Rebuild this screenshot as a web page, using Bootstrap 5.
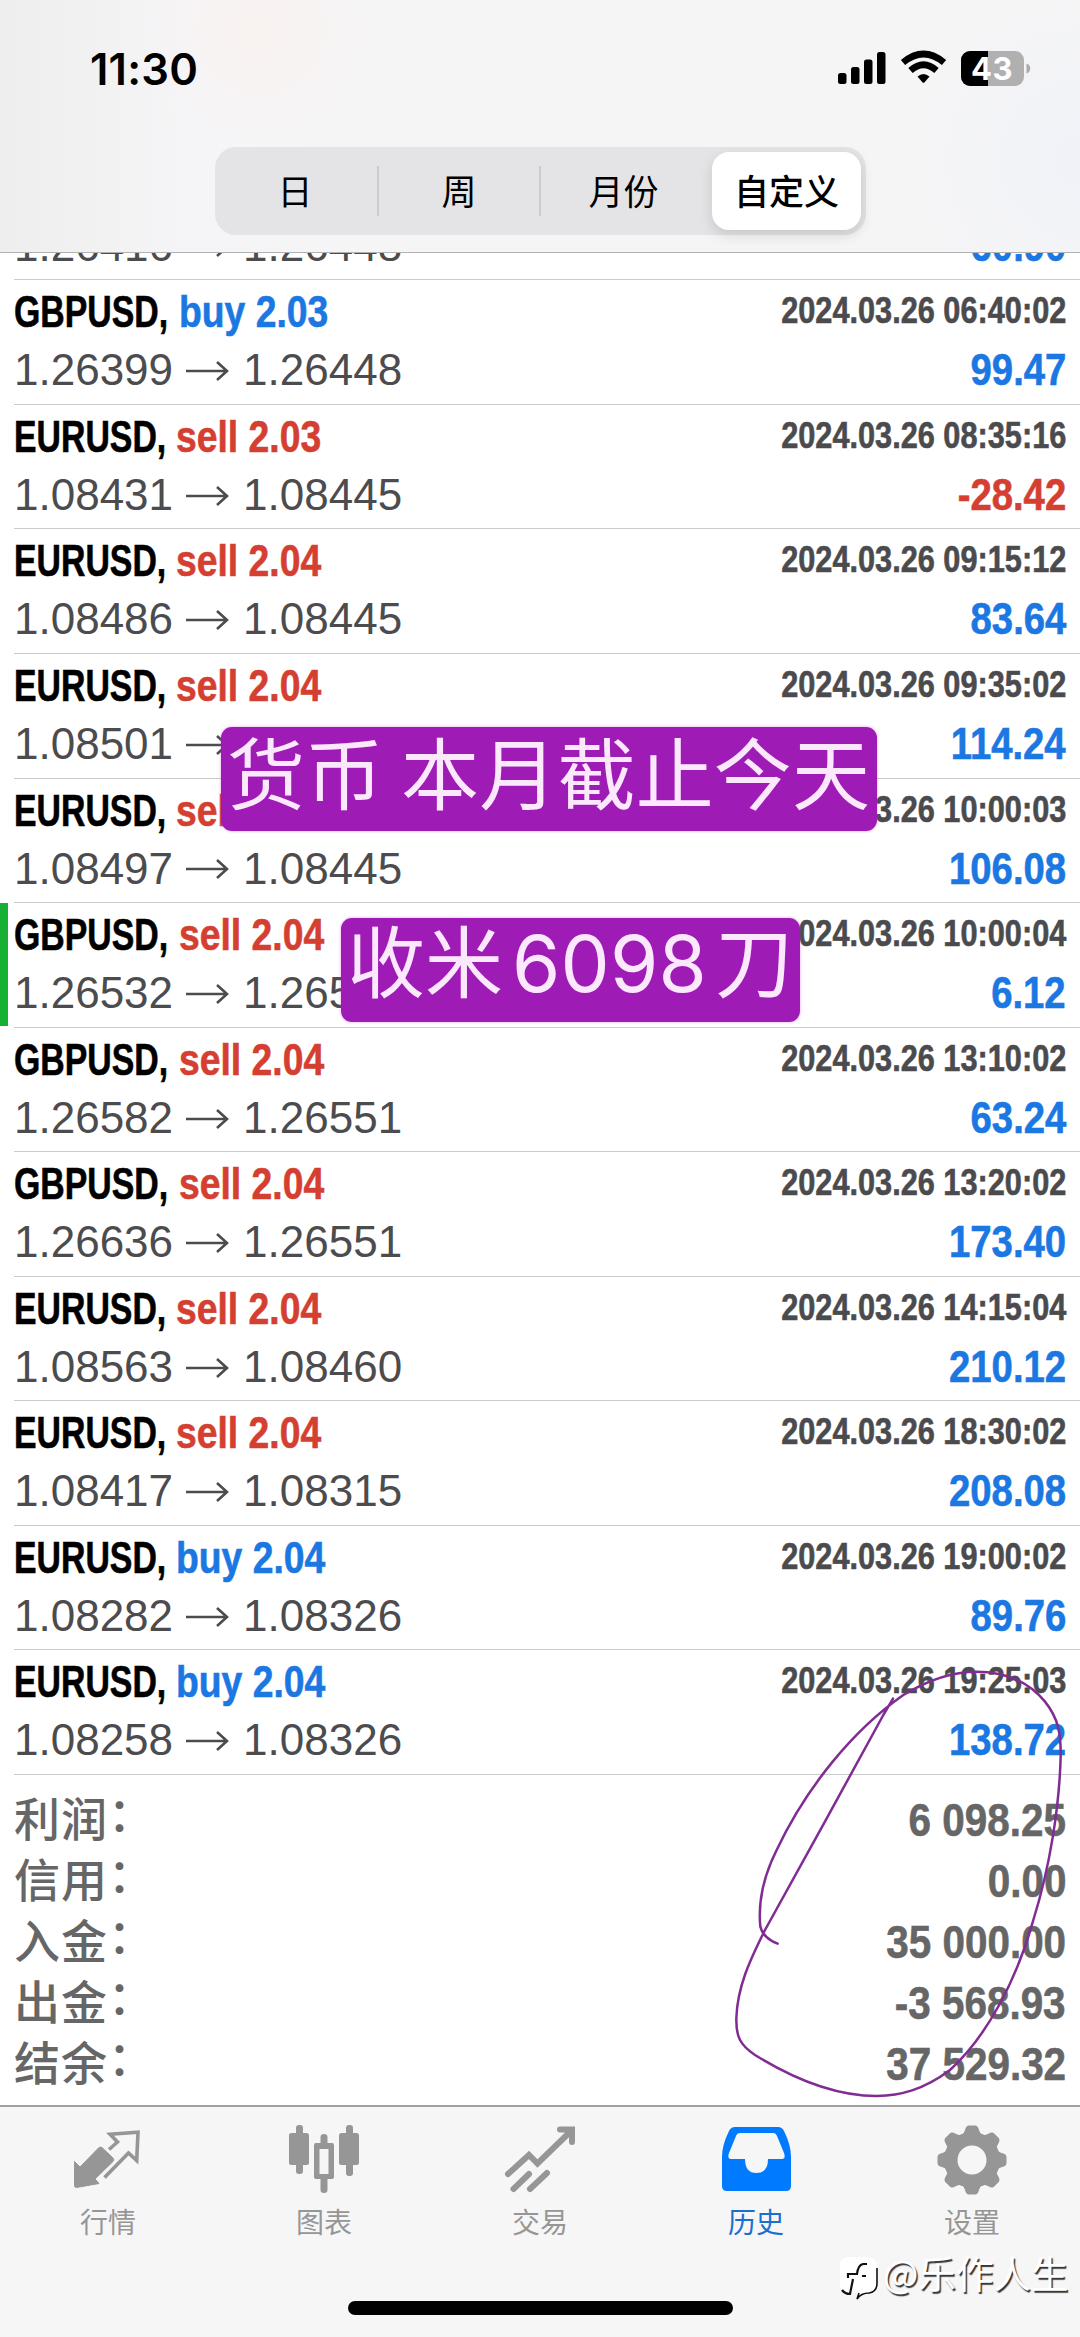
<!DOCTYPE html>
<html lang="zh-CN">
<head>
<meta charset="utf-8">
<meta name="viewport" content="width=device-width, initial-scale=1">
<title>历史</title>
<link href="https://cdn.jsdelivr.net/npm/bootstrap@5.3.0/dist/css/bootstrap.min.css" rel="stylesheet">
<script src="https://cdn.jsdelivr.net/npm/bootstrap@5.3.0/dist/js/bootstrap.bundle.min.js"></script>
<style>
body{width:1080px;height:2337px;overflow:hidden;background:#fff;font-family:"Liberation Sans","Noto Sans CJK SC",sans-serif}
.screen{width:1080px;height:2337px;overflow:hidden}
.topbar{height:253px;border-bottom:1.5px solid #b2b2b4;background:radial-gradient(circle at 260px 30px,#f9f2f1 0,rgba(249,242,241,0) 130px),radial-gradient(circle at 1080px 160px,#f0f2f8 0,rgba(240,242,248,0) 160px),linear-gradient(90deg,#eee 0,#f5f5f7 190px,#f5f5f6 100%)}
.statusrow{height:147px;padding:39px 49px 0 90px}
.clock{font:600 43.5px/60px Inter,sans-serif;letter-spacing:.2px;color:#000}
.segments{width:651px;height:88px;margin-left:215px;border-radius:21px;background:#e4e4e6;padding:5px}
.segments button{border:0;background:none;padding:0 0 3px;font:400 35px/75px "Noto Sans CJK SC",sans-serif;color:#000;border-radius:17px;width:162px;height:78px}
.segments button:first-child{width:158px;padding-right:8px}
.segments button:nth-of-type(3){padding-left:5px}
.segments button.on{background:#fff;width:149px;font-weight:500;box-shadow:0 5px 14px rgba(0,0,0,.13)}
.segments i{width:2px;height:50px;background:#cbcbcf;margin-left:-1px;margin-right:-1px}
.deals{height:1522px;overflow:hidden}
.deal{height:124.57px;flex:none;margin-left:14px;padding:3px 14px 0 0;border-bottom:1.5px solid #cbcbcd;position:relative}
.deal .line{height:58px;line-height:58px;font-size:44.5px;white-space:nowrap}
.sym,.act,.when,.sum{-webkit-text-stroke:.6px currentColor}
.sym{display:inline-block;font-weight:700;color:#000;transform:scaleX(.76);transform-origin:0 50%;margin-right:-38px}
.act{display:inline-block;font-weight:700;transform:scaleX(.838);transform-origin:0 50%}
.when{display:inline-block;font-weight:700;font-size:36px;line-height:56px;color:#4b4b4e;transform:scaleX(.853);transform-origin:100% 50%}
.sum{display:inline-block;font-weight:700;transform:scaleX(.86);transform-origin:100% 50%}
.up{color:#1b77e2}.down{color:#d43f31}
.px{font-size:44px;color:#4c4c4f}
.px svg{width:43px;height:22px;margin:0 14px 5px 13px;display:inline-block;vertical-align:middle}
.marked::before{content:"";position:absolute;left:-14px;top:0;width:8px;height:123px;background:#15b034}
.totals{height:332px;padding:14px 14px 0 14px;color:#666;border-bottom:2px solid #a0a0a3}
.totals>div{height:61px;line-height:61px}
.totals .k{font-family:"Noto Sans CJK SC",sans-serif;font-size:46px;font-weight:500;letter-spacing:1px;line-height:54px}
.totals .k b{display:inline-block;font-weight:500;transform:translate(0,-5px)}
.totals .sum{font-size:47px}
.tabs{height:230px;background:#f6f6f6}
.tab{width:216px;padding-top:13px;color:#969696}
.tab svg{width:76px;height:76px}
.tab span{font:400 28px/34px "Noto Sans CJK SC",sans-serif;margin-top:8px}
.tab.on{color:#007aff}.tab.on span{color:#1a6fd0}
.homebar{position:absolute;left:348px;top:2301px;width:385px;height:14px;border-radius:7px;background:#000}
.sticker{position:absolute;background:#9f1bb6;color:#fce8fd;border-radius:11px;height:104px;font:400 78px/90px Inter,"Noto Sans CJK SC",sans-serif;white-space:nowrap;box-shadow:0 0 3px rgba(200,60,220,.5)}
.s1{left:221px;top:727px;width:656px;padding-left:6px;line-height:86px;font-family:"Noto Sans CJK SC",sans-serif;letter-spacing:.2px}
.s2{left:341px;top:918px;width:459px;padding-left:6px;line-height:92px}
.s2 em{font-style:normal;margin:0 8px 0 9px;letter-spacing:.2px}
.ink{position:absolute;left:640px;top:1620px;width:440px;height:500px}
.sign{position:absolute;left:839px;top:2249px;height:50px;color:#fff;font:400 37.5px/46px "Noto Sans CJK SC",sans-serif;text-shadow:1.5px 1.5px 1px #333;white-space:nowrap}
.sign svg{width:40px;height:46px;margin-right:4px;margin-top:7px}
</style>
</head>
<body>
<svg class="d-none"><symbol id="arr" viewBox="0 0 43 22"><path d="M0 11H41M31 2l10 9-10 9" fill="none" stroke="#4c4c4f" stroke-width="2.600"/></symbol></svg>
<main class="screen position-relative d-flex flex-column">
<header class="topbar flex-shrink-0">
  <div class="statusrow d-flex justify-content-between align-items-start">
    <div class="clock">11:30</div>
    <svg width="193" height="44" viewBox="0 0 193 44" style="margin-top:8px">
      <g><rect x="0" y="26" width="8.5" height="11" rx="2.5"/><rect x="13" y="20" width="8.5" height="17" rx="2.5"/><rect x="26" y="12.500" width="8.500" height="24.500" rx="2.500"/><rect x="39" y="5" width="8.500" height="32" rx="2.500"/></g>
      <g fill="none" stroke="#000" stroke-width="6.600"><path d="M65 15.500Q85.500 -1.500 106 15.500"/><path d="M72.500 23.500Q85.500 12 98.500 23.500"/></g>
      <path d="M79.500 29.500Q85.500 24.500 91.500 29.500L86.600 35.300Q85.500 36.400 84.400 35.300Z"/>
      <rect x="123" y="4" width="63" height="35" rx="9" fill="#b0b0b1"/><path d="M132 4h18v35h-18a9 9 0 0 1-9-9V13a9 9 0 0 1 9-9z"/>
      <path d="M188.500 16.500c5 1.500 5 8.500 0 10z" fill="#aaaaac"/>
      <text x="154" y="32.500" text-anchor="middle" font-family="Inter, sans-serif" font-weight="700" font-size="31" letter-spacing=".5" fill="#fff">43</text>
    </svg>
  </div>
  <div class="segments d-flex align-items-center">
    <button type="button">日</button><i></i><button type="button">周</button><i></i><button type="button">月份</button><button type="button" class="on ms-auto">自定义</button>
  </div>
</header>

<section class="deals d-flex flex-column justify-content-end flex-shrink-0">
  <div class="deal"><div class="line"></div><div class="line d-flex justify-content-between"><span class="px">1.26416<svg><use href="#arr"/></svg>1.26448</span><span class="sum up">60.90</span></div></div>
  <div class="deal"><div class="line d-flex justify-content-between"><div><span class="sym">GBPUSD,</span><span class="act up">buy 2.03</span></div><span class="when">2024.03.26 06:40:02</span></div><div class="line d-flex justify-content-between"><span class="px">1.26399<svg><use href="#arr"/></svg>1.26448</span><span class="sum up">99.47</span></div></div>
  <div class="deal"><div class="line d-flex justify-content-between"><div><span class="sym">EURUSD,</span><span class="act down">sell 2.03</span></div><span class="when">2024.03.26 08:35:16</span></div><div class="line d-flex justify-content-between"><span class="px">1.08431<svg><use href="#arr"/></svg>1.08445</span><span class="sum down">-28.42</span></div></div>
  <div class="deal"><div class="line d-flex justify-content-between"><div><span class="sym">EURUSD,</span><span class="act down">sell 2.04</span></div><span class="when">2024.03.26 09:15:12</span></div><div class="line d-flex justify-content-between"><span class="px">1.08486<svg><use href="#arr"/></svg>1.08445</span><span class="sum up">83.64</span></div></div>
  <div class="deal"><div class="line d-flex justify-content-between"><div><span class="sym">EURUSD,</span><span class="act down">sell 2.04</span></div><span class="when">2024.03.26 09:35:02</span></div><div class="line d-flex justify-content-between"><span class="px">1.08501<svg><use href="#arr"/></svg>1.08445</span><span class="sum up">114.24</span></div></div>
  <div class="deal"><div class="line d-flex justify-content-between"><div><span class="sym">EURUSD,</span><span class="act down">sell 2.04</span></div><span class="when">2024.03.26 10:00:03</span></div><div class="line d-flex justify-content-between"><span class="px">1.08497<svg><use href="#arr"/></svg>1.08445</span><span class="sum up">106.08</span></div></div>
  <div class="deal marked"><div class="line d-flex justify-content-between"><div><span class="sym">GBPUSD,</span><span class="act down">sell 2.04</span></div><span class="when">2024.03.26 10:00:04</span></div><div class="line d-flex justify-content-between"><span class="px">1.26532<svg><use href="#arr"/></svg>1.26529</span><span class="sum up">6.12</span></div></div>
  <div class="deal"><div class="line d-flex justify-content-between"><div><span class="sym">GBPUSD,</span><span class="act down">sell 2.04</span></div><span class="when">2024.03.26 13:10:02</span></div><div class="line d-flex justify-content-between"><span class="px">1.26582<svg><use href="#arr"/></svg>1.26551</span><span class="sum up">63.24</span></div></div>
  <div class="deal"><div class="line d-flex justify-content-between"><div><span class="sym">GBPUSD,</span><span class="act down">sell 2.04</span></div><span class="when">2024.03.26 13:20:02</span></div><div class="line d-flex justify-content-between"><span class="px">1.26636<svg><use href="#arr"/></svg>1.26551</span><span class="sum up">173.40</span></div></div>
  <div class="deal"><div class="line d-flex justify-content-between"><div><span class="sym">EURUSD,</span><span class="act down">sell 2.04</span></div><span class="when">2024.03.26 14:15:04</span></div><div class="line d-flex justify-content-between"><span class="px">1.08563<svg><use href="#arr"/></svg>1.08460</span><span class="sum up">210.12</span></div></div>
  <div class="deal"><div class="line d-flex justify-content-between"><div><span class="sym">EURUSD,</span><span class="act down">sell 2.04</span></div><span class="when">2024.03.26 18:30:02</span></div><div class="line d-flex justify-content-between"><span class="px">1.08417<svg><use href="#arr"/></svg>1.08315</span><span class="sum up">208.08</span></div></div>
  <div class="deal"><div class="line d-flex justify-content-between"><div><span class="sym">EURUSD,</span><span class="act up">buy 2.04</span></div><span class="when">2024.03.26 19:00:02</span></div><div class="line d-flex justify-content-between"><span class="px">1.08282<svg><use href="#arr"/></svg>1.08326</span><span class="sum up">89.76</span></div></div>
  <div class="deal"><div class="line d-flex justify-content-between"><div><span class="sym">EURUSD,</span><span class="act up">buy 2.04</span></div><span class="when">2024.03.26 19:25:03</span></div><div class="line d-flex justify-content-between"><span class="px">1.08258<svg><use href="#arr"/></svg>1.08326</span><span class="sum up">138.72</span></div></div>
</section>

<section class="totals flex-shrink-0">
  <div class="d-flex justify-content-between"><span class="k">利润<b>：</b></span><span class="sum">6 098.25</span></div>
  <div class="d-flex justify-content-between"><span class="k">信用<b>：</b></span><span class="sum">0.00</span></div>
  <div class="d-flex justify-content-between"><span class="k">入金<b>：</b></span><span class="sum">35 000.00</span></div>
  <div class="d-flex justify-content-between"><span class="k">出金<b>：</b></span><span class="sum">-3 568.93</span></div>
  <div class="d-flex justify-content-between"><span class="k">结余<b>：</b></span><span class="sum">37 529.32</span></div>
</section>

<nav class="tabs d-flex flex-shrink-0">
  <div class="tab d-flex flex-column align-items-center">
    <svg viewBox="0 0 76 76"><path fill="currentColor" stroke="currentColor" stroke-width="1" stroke-linejoin="round" d="M4.500 41.500L10 47 28.500 28q2-2 4 0L43 38q1.500 1.500 0 3.500L25 59l4 4.500L6.500 67.500q-2 0-2-2z"/><path fill="none" stroke="currentColor" stroke-width="3.600" d="M39 29.500l8.500-7.500-7.500-7.700L68 12.200 66.700 40.500 58.500 33 34.500 57.500"/></svg>
    <span>行情</span></div>
  <div class="tab d-flex flex-column align-items-center">
    <svg viewBox="0 0 76 76" fill="currentColor"><rect x="3" y="13" width="20" height="32" rx="2.500"/><rect x="10" y="5" width="7" height="49" rx="3"/><rect x="53" y="13" width="20" height="32" rx="2.500"/><rect x="60" y="5" width="7" height="51" rx="3"/><path fill-rule="evenodd" d="M30 23h4.500v-6q0-3 3.500-3t3.500 3v6H46q2 0 2 2v32q0 2-2 2h-4.500v11q0 3-3.500 3t-3.500-3V59H30q-2 0-2-2V25q0-2 2-2zm3.500 6v25h9V29z"/></svg>
    <span>图表</span></div>
  <div class="tab d-flex flex-column align-items-center">
    <svg viewBox="0 0 76 76" fill="none" stroke="currentColor" stroke-width="6" stroke-linecap="round"><path d="M6 54L27 35l8.500 8.500L69 11M58 9.500h12V22M11.500 69L27 54M28 69l17-16"/></svg>
    <span>交易</span></div>
  <div class="tab on d-flex flex-column align-items-center">
    <svg viewBox="0 0 76 76" fill="currentColor"><path fill-rule="evenodd" d="M17 7h43q4 0 6 4 7 14 7 26v29q0 5-5 5H9q-5 0-5-5V37Q4 25 11 11q2-4 6-4zm5 6q-3 0-4 3l-7 17q-2 6 2 6h14q0 14 11.500 14T50 39h14q4 0 2-6l-7-17q-1-3-4-3z"/></svg>
    <span>历史</span></div>
  <div class="tab d-flex flex-column align-items-center">
    <svg viewBox="0 -1 76 76"><g fill="currentColor"><path fill-rule="evenodd" d="M38 11a28 28 0 1 0 0 56 28 28 0 0 0 0-56zm0 13.500a14.500 14.500 0 1 1 0 29 14.500 14.500 0 0 1 0-29z"/>
    <g id="teeth"><path id="tooth" d="M27 14q3-1 4-5 1-4.500 4-4.500h6q3 0 4 4.500 1 4 4 5l-3 5H30z"/><use href="#tooth" transform="rotate(45 38 39)"/><use href="#tooth" transform="rotate(90 38 39)"/><use href="#tooth" transform="rotate(135 38 39)"/></g><use href="#teeth" transform="rotate(180 38 39)"/></g></svg>
    <span>设置</span></div>
</nav>

<div class="homebar"></div>
<div class="sticker s1">货币 本月截止今天</div>
<div class="sticker s2">收米<em>6098</em>刀</div>
<svg class="ink" viewBox="0 0 1320 1500"><path fill="none" stroke="#802c93" stroke-width="7.500" stroke-linecap="round" stroke-linejoin="round" d="M413 971C385 960 367 945 361 920C354 850 370 770 410 690C500 500 640 330 790 225C880 170 950 155 1010 155C1100 155 1165 185 1215 245C1255 295 1263 340 1262 410C1258 560 1230 740 1180 900C1130 1080 1040 1250 930 1350C850 1410 780 1427 710 1428C580 1428 450 1370 345 1305C300 1275 288 1250 289 1195C292 1100 330 1020 375 930C470 760 640 450 730 285L759 236"/></svg>
<div class="sign d-flex"><svg viewBox="0 0 40 46"><path fill="#fff" d="M10 1h18q10 0 10 10v16q0 9-9 10-6 1-10 6l-1-6h-8q-9 0-9-9V10q0-9 9-9z"/><path fill="none" stroke="#111" stroke-width="2.200" d="M28 8h-4q-5 1-6 10H9v4M14 23l-3 15q-5 0-8-4M23 20h4"/><path fill="none" stroke="#111" stroke-width="1.600" d="M38 12v15q0 9-8 10-8 0-12 6l2-6"/></svg>@乐作人生</div>
</main>
</body>
</html>
